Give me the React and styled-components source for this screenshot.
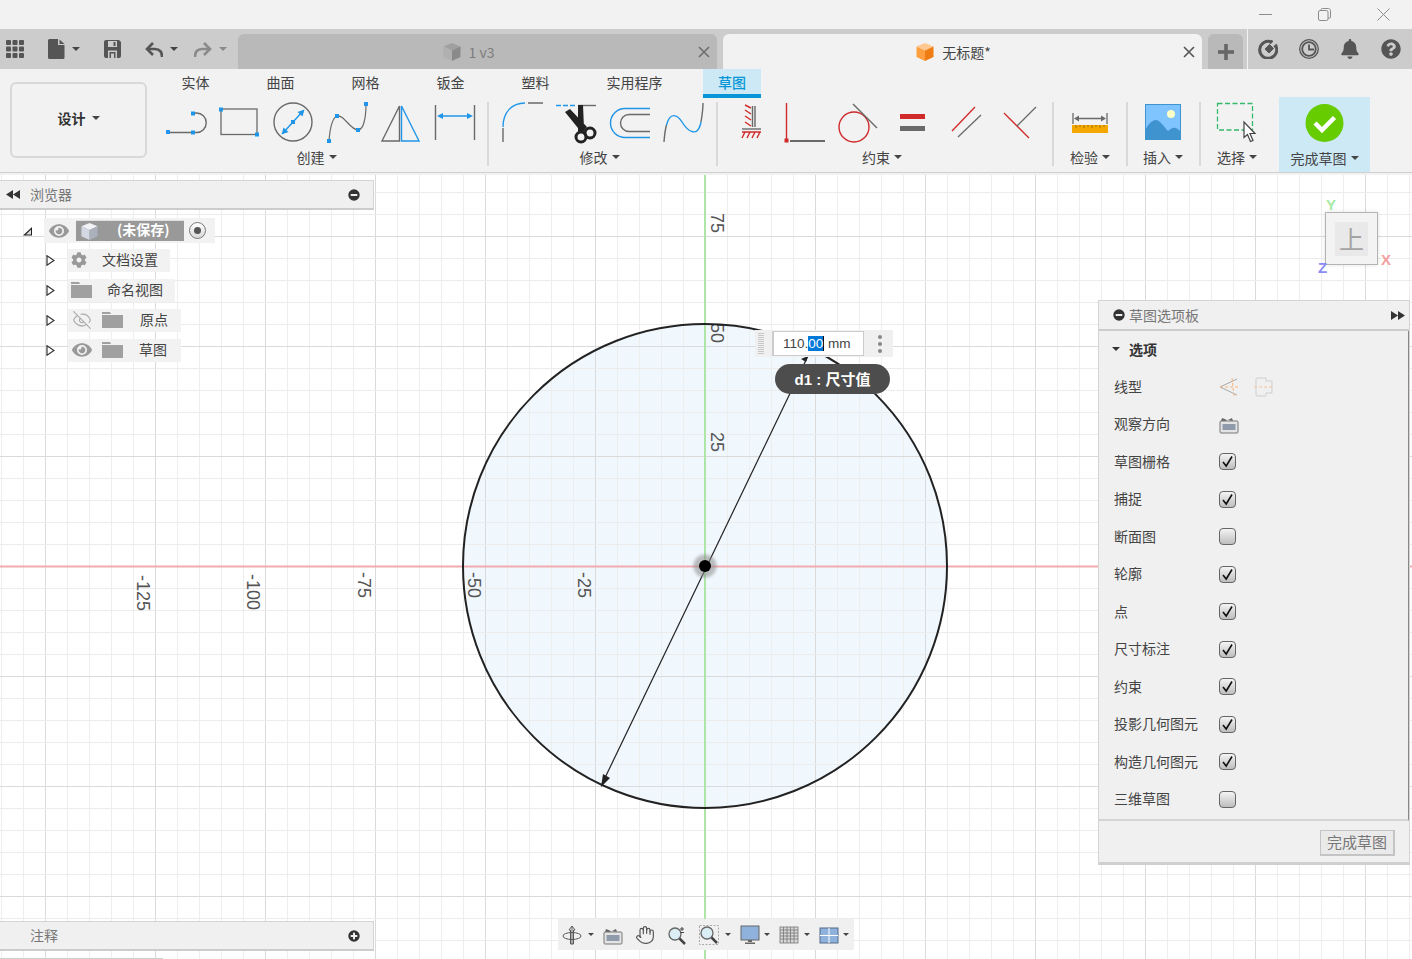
import React from "react";
import styled, { createGlobalStyle } from "styled-components";
import { FaBell, FaCog, FaEye, FaQuestionCircle } from "react-icons/fa";
import { LuEyeOff, LuHand } from "react-icons/lu";

const BLUE = "#2196e8";
const GRAY = "#6a6a6a";
const RED = "#d02a2a";

const GlobalStyle = createGlobalStyle`
	html, body {
		margin: 0;
		padding: 0;
		background: #f2f2f2;
	}
	body {
		font-family: "Noto Sans CJK SC", "Liberation Sans", sans-serif;
		font-size: 14px;
		color: #444;
	}
	* { box-sizing: border-box; }
`;

const Page = styled.div`
	width: 1412px;
	height: 959px;
	display: flex;
	flex-direction: column;
	overflow: hidden;
`;

/* title bar */
const TitleBar = styled.div`
	height: 29px;
	flex: none;
	display: flex;
	justify-content: flex-end;
	align-items: center;
	gap: 46px;
	padding-right: 22px;
	background: #f2f2f2;
`;

const WindowIcon = styled.svg`
	width: 13px;
	height: 13px;
	fill: none;
	stroke: #8c8c8c;
	stroke-width: 1;
`;

/* tab bar */
const TabBar = styled.div`
	height: 40px;
	flex: none;
	display: flex;
	background: #cccccc;
`;

const QuickTools = styled.div`
	width: 238px;
	flex: none;
	display: flex;
	align-items: center;
	gap: 24px;
	padding-left: 6px;
`;

const ToolGroup = styled.div`
	display: flex;
	align-items: center;
	gap: 7px;
`;

const HistoryTools = styled.div`
	display: flex;
	align-items: center;
	gap: 16px;
`;

const Caret = styled.span`
	flex: none;
	width: 0;
	height: 0;
	border-left: ${(p) => p.$size || 4}px solid transparent;
	border-right: ${(p) => p.$size || 4}px solid transparent;
	border-top: ${(p) => p.$size || 4}px solid ${(p) => p.$color || "#444"};
`;

const Tab = styled.div`
	width: 479px;
	height: 35px;
	margin-top: 5px;
	margin-right: 6px;
	flex: none;
	display: flex;
	align-items: center;
	padding: 0 7px 0 0;
	border-radius: 6px 6px 0 0;
	background: ${(p) => (p.$active ? "#f2f2f2" : "#b9b9b9")};
	color: ${(p) => (p.$active ? "#444" : "#7d7d7d")};
`;

const TabTitle = styled.div`
	flex: 1;
	display: flex;
	justify-content: center;
	align-items: center;
	gap: 7px;
	font-size: 14px;
`;

const PlusTab = styled.div`
	width: 35px;
	height: 35px;
	margin-top: 5px;
	flex: none;
	display: flex;
	justify-content: center;
	align-items: center;
	border-radius: 6px 6px 0 0;
	background: #b9b9b9;
`;

const StatusTools = styled.div`
	margin-left: 4px;
	flex: 1;
	display: flex;
	align-items: center;
	gap: 21px;
	padding: 0 0 0 10px;
	border-left: 1px solid #f2f2f2;
	color: #555;
`;

/* ribbon */
const Ribbon = styled.div`
	height: 104px;
	flex: none;
	display: flex;
	padding-left: 10px;
	background: #f2f2f2;
	border-bottom: 1px solid #cfcfcf;
`;

const DesignButton = styled.div`
	width: 137px;
	height: 76px;
	margin-top: 13px;
	padding-bottom: 5px;
	flex: none;
	display: flex;
	justify-content: center;
	align-items: center;
	gap: 6px;
	border: 2px solid #d8d8d8;
	border-radius: 6px;
	font-weight: 700;
	color: #333;
`;

const RibbonMain = styled.div`
	margin-left: 6px;
	display: flex;
	flex-direction: column;
`;

const RibbonTabs = styled.div`
	height: 29px;
	display: flex;
`;

const RibbonTab = styled.div`
	height: 29px;
	display: flex;
	justify-content: center;
	padding: 4px 28.5px 0;
	line-height: 18px;
	color: #444;
`;

const ActiveRibbonTab = styled.div`
	margin-left: 12px;
	width: 58px;
	height: 29px;
	padding-top: 4px;
	text-align: center;
	line-height: 18px;
	font-weight: 500;
	color: #0696d7;
	background: #cde9f6;
	border-bottom: 4px solid #0696d7;
`;

const Groups = styled.div`
	height: 74px;
	display: flex;
`;

const Group = styled.div`
	display: flex;
	flex-direction: column;
	padding-left: ${(p) => p.$pl}px;
	padding-right: ${(p) => p.$pr}px;
`;

const GroupIcons = styled.div`
	height: 44px;
	margin-top: 2px;
	display: flex;
	gap: 10px;
`;

const GroupLabel = styled.div`
	height: 20px;
	margin-top: 3px;
	padding-right: ${(p) => p.$shift || 0}px;
	display: flex;
	justify-content: center;
	align-items: center;
	gap: 4px;
	line-height: 20px;
	white-space: nowrap;
`;

const Separator = styled.div`
	width: 2px;
	height: 64px;
	margin-top: 4px;
	flex: none;
	background: #d9d9d9;
`;

const FinishButton = styled.div`
	width: 91px;
	height: 75px;
	margin-top: -1px;
	margin-left: 20px;
	padding-top: 4px;
	flex: none;
	display: flex;
	flex-direction: column;
	align-items: center;
	background: #cde9f6;
`;

const RibbonIcon = styled.svg.attrs({ viewBox: "0 0 44 44" })`
	width: 44px;
	height: 44px;
	flex: none;
	fill: none;
	overflow: visible;
`;

const Handle = ({ x, y }) => <rect x={x - 2} y={y - 2} width="4" height="4" fill={BLUE} />;

/* canvas */
const Canvas = styled.div`
	position: relative;
	flex: 1;
	border-top: 2px solid #f2f2f2;
	background: #fff;
`;

const Drawing = styled.svg`
	display: block;
	width: 1412px;
	height: 784px;
`;

const AxisLabel = styled.text`
	font-family: "Liberation Sans", sans-serif;
	font-size: 18px;
	fill: #555;
	text-anchor: middle;
	dominant-baseline: central;
`;

const Halo = styled.circle`
	filter: blur(1.5px);
`;

const Panel = styled.div`
	position: absolute;
	left: 0;
	width: 374px;
	top: ${(p) => (p.$top !== undefined ? `${p.$top}px` : "auto")};
	bottom: ${(p) => (p.$bottom !== undefined ? `${p.$bottom}px` : "auto")};
`;

const PanelHeader = styled.div`
	height: 30px;
	display: flex;
	align-items: center;
	padding: 0 13px 0 6px;
	background: #f0f0f0;
	border: 1px solid #d4d4d4;
	border-bottom: 2px solid #cccccc;
	border-left: 0;
	color: #777;
`;

const PanelTitle = styled.span`
	flex: 1;
	margin-left: ${(p) => p.$ml || 0}px;
	margin-top: -1px;
`;

const TreeList = styled.div`
	padding-top: 8px;
	display: flex;
	flex-direction: column;
`;

const RootRow = styled.div`
	height: 25px;
	margin-bottom: 2px;
	display: flex;
	align-items: center;
`;

const RootCells = styled.div`
	margin-left: 12px;
	height: 25px;
	width: 171px;
	display: flex;
	align-items: center;
	background: #f2f2f2;
`;

const SelectedCell = styled.div`
	width: 108px;
	height: 21px;
	margin-left: 7px;
	display: flex;
	align-items: center;
	background: #999;
	border-top: 1px solid #e0e0e0;
`;

const SelectedLabel = styled.span`
	margin-left: 18px;
	margin-top: -4px;
	font-weight: 700;
	font-size: 14px;
	line-height: 20px;
	color: #fff;
`;

const RootRadio = styled.span`
	width: 17px;
	height: 17px;
	margin-left: 5px;
	flex: none;
	display: flex;
	justify-content: center;
	align-items: center;
	border: 1.5px solid #777;
	border-radius: 50%;
	background: linear-gradient(#fff, #d8d8d8);
	&::after {
		content: "";
		width: 7px;
		height: 7px;
		border-radius: 50%;
		background: #555;
	}
`;

const TreeRow = styled.div`
	height: 30px;
	display: flex;
	align-items: center;
	padding-left: 46px;
`;

const TreeCell = styled.div`
	height: 23px;
	width: ${(p) => p.$width}px;
	margin-left: 13px;
	flex: none;
	display: flex;
	align-items: center;
	padding-left: 3px;
	background: #f2f2f2;
	color: #444;
`;

const TreeText = styled.span`
	margin-left: ${(p) => p.$ml}px;
	margin-top: -2px;
`;

const EyeWrap = styled.span`
	width: 21px;
	margin-left: ${(p) => p.$ml || 0}px;
	flex: none;
	display: flex;
	justify-content: center;
	color: ${(p) => p.$color || "#999"};
`;

const IconGap = styled.span`
	margin-left: ${(p) => p.$ml}px;
	display: flex;
`;

const OptionsPanel = styled.div`
	position: absolute;
	top: 125px;
	left: 1098px;
	width: 312px;
	height: 565px;
	display: flex;
	flex-direction: column;
	background: #f0f0f0;
	border: 1px solid #d4d4d4;
	border-bottom: 3px solid #cfcfcf;
`;

const OptionsHeader = styled.div`
	height: 30px;
	flex: none;
	display: flex;
	align-items: center;
	padding: 0 4px 0 14px;
	border-bottom: 2px solid #cccccc;
	color: #777;
`;

const OptionsBody = styled.div`
	flex: 1;
	display: flex;
	flex-direction: column;
	padding-left: 15px;
	border-right: 1px solid #888;
	border-bottom: 2px solid #d4d4d4;
`;

const SectionTitle = styled.div`
	height: 37px;
	margin-left: -2px;
	padding-bottom: 2px;
	display: flex;
	align-items: center;
	gap: 9px;
	font-weight: 700;
	color: #333;
`;

const OptionRow = styled.div`
	height: 37.5px;
	display: flex;
	align-items: center;
`;

const OptionLabel = styled.div`
	width: 105px;
	margin-top: -2px;
	flex: none;
	color: #444;
`;

const OptionControls = styled.div`
	display: flex;
	align-items: center;
	gap: 15px;
`;

const CheckBox = styled.div`
	width: 17px;
	height: 17px;
	display: flex;
	align-items: center;
	justify-content: center;
	border: 1.5px solid #666;
	border-radius: 4px;
	background: linear-gradient(#f4f4f4, #bdbdbd);
`;

const OptionsFooter = styled.div`
	height: 41px;
	flex: none;
	display: flex;
	justify-content: flex-end;
	align-items: flex-start;
	padding: 9px 14px 0 0;
`;

const FinishSmall = styled.div`
	width: 75px;
	height: 26px;
	padding-bottom: 2px;
	display: flex;
	justify-content: center;
	align-items: center;
	background: #eaeaea;
	border: 1px solid #c4c4c4;
	border-right-width: 2px;
	border-bottom-width: 2px;
	font-size: 15px;
	color: #777;
`;

const DimensionBox = styled.div`
	position: absolute;
	left: 755px;
	top: 155px;
	width: 138px;
	height: 27px;
	display: flex;
	align-items: center;
	background: #f0f0f0;
`;

const Grip = styled.div`
	width: 6px;
	height: 22px;
	margin-left: 3px;
	background: repeating-linear-gradient(#c8c8c8 0 1px, transparent 1px 2px);
`;

const DimensionInput = styled.div`
	width: 92px;
	height: 25px;
	margin-left: 8px;
	padding-left: 9px;
	display: flex;
	align-items: center;
	background: #fff;
	border: 1px solid #ccc;
	border-left-width: 2px;
	font-family: "Liberation Sans", sans-serif;
	font-size: 13.5px;
	color: #444;
	white-space: pre;
`;

const Selected = styled.span`
	background: #0078d7;
	color: #fff;
	border-right: 1px solid #111;
`;

const MoreDots = styled.div`
	margin-left: 14px;
	display: flex;
	flex-direction: column;
	gap: 3px;
`;

const MoreDot = styled.span`
	width: 4px;
	height: 4px;
	border-radius: 50%;
	background: #888;
`;

const ValuePill = styled.div`
	position: absolute;
	left: 775px;
	top: 189px;
	width: 115px;
	height: 30px;
	padding-bottom: 2px;
	display: flex;
	justify-content: center;
	align-items: center;
	border-radius: 15px;
	background: #4d4d4d;
	color: #fff;
	font-family: "Liberation Sans", "Noto Sans CJK SC", sans-serif;
	font-weight: 700;
	font-size: 15px;
`;

const ViewCube = styled.div`
	position: absolute;
	left: 1325px;
	top: 37px;
	width: 53px;
	height: 53px;
	display: flex;
	justify-content: center;
	align-items: center;
	background: #f3f3f3;
	border: 1px solid #b4b4b4;
	box-shadow: 0 0 4px rgba(0, 0, 0, 0.12);
`;

const CubeFace = styled.div`
	width: 33px;
	height: 34px;
	display: flex;
	justify-content: center;
	align-items: center;
	background: #e9e9e9;
	color: #a4a4a4;
	font-size: 25px;
	line-height: 1;
`;

const AxisTag = styled.span`
	position: absolute;
	left: ${(p) => p.$x}px;
	top: ${(p) => p.$y}px;
	font-family: "Liberation Sans", sans-serif;
	font-size: 15px;
	font-weight: 700;
	color: ${(p) => p.$color};
`;

const NavBar = styled.div`
	position: absolute;
	left: 558px;
	bottom: 9px;
	width: 296px;
	height: 31px;
	display: flex;
	align-items: center;
	gap: 9px;
	padding-left: 4px;
	background: #f0f0f0;
`;

const NavItem = styled.div`
	display: flex;
	align-items: center;
	gap: ${(p) => p.$gap || 6}px;
	width: ${(p) => p.$width || "auto"};
	color: #555;
`;

const NavIcon = styled.svg.attrs({ viewBox: "0 0 20 20" })`
	width: 20px;
	height: 20px;
	flex: none;
	fill: none;
`;

const NavCaret = styled(Caret).attrs({ $size: 3.5 })``;

const StatusLine = styled.div`
	position: absolute;
	left: 0;
	bottom: 0;
	width: 163px;
	height: 1px;
	background: #cfcfcf;
`;

/* small drawings */
const MinusBall = ({ plus }) => (
	<svg width="12" height="12" viewBox="0 0 12 12">
		<circle cx="6" cy="6" r="5.7" fill="#333" />
		<rect x="2.7" y="5" width="6.6" height="2" fill="#eee" />
		{plus && <rect x="5" y="2.7" width="2" height="6.6" fill="#eee" />}
	</svg>
);

const DoubleArrow = ({ left }) => (
	<svg width="14" height="9" viewBox="0 0 14 9" fill="#333">
		{left ? <path d="M7 0v9L0 4.5zM14 0v9L7 4.5z" /> : <path d="M0 0v9l7-4.5zM7 0v9l7-4.5z" />}
	</svg>
);

const Folder = () => (
	<svg width="21" height="16" viewBox="0 0 21 16" fill="#a0a0a0">
		<path d="M0 0h8l1 2h-9zM0 3h21v13H0z" />
	</svg>
);

const Expander = () => (
	<svg width="9" height="11" viewBox="0 0 9 11">
		<path d="M1 .8L8 5.5 1 10.2z" fill="#fff" stroke="#333" strokeWidth="1.2" />
	</svg>
);

const Check = () => (
	<svg width="13" height="13" viewBox="0 0 13 13" fill="none" stroke="#111" strokeWidth="1.6">
		<path d="M2 7l3.2 4L11 1.5" />
	</svg>
);

const Cube = ({ top, left, right, size = 20 }) => (
	<svg width={size} height={size} viewBox="0 0 20 20">
		<path d="M10 1l8.5 3.5L10 8.5 1.5 4.5z" fill={top} />
		<path d="M1.5 4.5L10 8.5V19L1.5 15z" fill={left} />
		<path d="M18.5 4.5L10 8.5V19l8.5-4z" fill={right} />
	</svg>
);

const HomeIcon = ({ size = 20 }) => (
	<svg width={size} height={size} viewBox="0 0 20 20">
		<path d="M2 7l1-3 5 2-1 1zM9 6l4-2 1 3z" fill="#666" />
		<rect x="1" y="7" width="18" height="12" rx="1" fill="#e4e4e4" stroke="#777" />
		<rect x="3.5" y="10" width="13" height="6" fill="#8f9bab" />
	</svg>
);

const options = [
	["草图栅格", true],
	["捕捉", true],
	["断面图", false],
	["轮廓", true],
	["点", true],
	["尺寸标注", true],
	["约束", true],
	["投影几何图元", true],
	["构造几何图元", true],
	["三维草图", false],
];

const ribbonTabs = ["实体", "曲面", "网格", "钣金", "塑料", "实用程序"];

const gridXs = Array.from({ length: 66 }, (_, i) => 1 + i * 22);
const gridYs = Array.from({ length: 38 }, (_, i) => 170 + i * 22);

const axisLabels = [
	["75", 717, 223],
	["50", 717, 333],
	["25", 717, 442],
	["-25", 584, 585],
	["-50", 474, 585],
	["-75", 364, 585],
	["-100", 253, 592],
	["-125", 143, 593],
];

function Viewport() {
	return (
		<Drawing viewBox="0 175 1412 784">
			<circle cx="705" cy="566" r="242" fill="#f0f7fd" />
			{gridXs.map((x) => {
				const major = (705 - x) % 110 === 0;
				return <line key={x} x1={x + 0.5} x2={x + 0.5} y1="175" y2="959" stroke={major ? "#dadada" : "#ececec"} strokeOpacity={major ? 1 : 0.9} />;
			})}
			{gridYs.map((y) => {
				const major = (566 - y) % 110 === 0;
				return <line key={y} y1={y + 0.5} y2={y + 0.5} x1="0" x2="1412" stroke={major ? "#dadada" : "#ececec"} />;
			})}
			<line x1="0" x2="1412" y1="566.5" y2="566.5" stroke="#f0acb0" strokeWidth="2" />
			<line x1="705" x2="705" y1="175" y2="959" stroke="#aee6a8" strokeWidth="2" />
			{axisLabels.map(([t, x, y]) => (
				<AxisLabel key={t} x={x} y={y} transform={`rotate(90 ${x} ${y})`}>
					{t}
				</AxisLabel>
			))}
			<circle cx="705" cy="566" r="242" fill="none" stroke="#222" strokeWidth="2" />
			<line x1="808" y1="356" x2="602" y2="784" stroke="#222" strokeWidth="1.2" />
			<path d="M601 787l2-13 7 4z" fill="#222" />
			<path d="M808 356l-7 3 5 3z" fill="#222" />
			<Halo cx="705" cy="566" r="11.5" fill="#8a8a8a" fillOpacity="0.55" />
			<circle cx="705" cy="566" r="6" fill="#000" />
		</Drawing>
	);
}

function App() {
	return (
		<Page>
			<GlobalStyle />
			<TitleBar>
				<WindowIcon viewBox="0 0 13 13">
					<path d="M0 6.5h13" />
				</WindowIcon>
				<WindowIcon viewBox="0 0 13 13">
					<rect x="0.5" y="2.5" width="9.5" height="10" rx="1.5" />
					<path d="M3 2.5V1.8C3 1 3.5.5 4.3.5H10.5c1.2 0 2 .8 2 2V9c0 .8-.5 1.2-1.2 1.2H10" />
				</WindowIcon>
				<WindowIcon viewBox="0 0 13 13">
					<path d="M.5.5l12 12M12.5.5l-12 12" />
				</WindowIcon>
			</TitleBar>

			<TabBar>
				<QuickTools>
					<svg width="18" height="18" viewBox="0 0 18 18" fill="#555">
						{[0, 6.5, 13].map((x) =>
							[0, 6.5, 13].map((y) => <rect key={`${x}-${y}`} x={x} y={y} width="5" height="5" rx="1" />)
						)}
					</svg>
					<ToolGroup>
						<svg width="17" height="20" viewBox="0 0 17 20" fill="#555">
							<path d="M1.5 0H10v6h6.5v12.5a1.5 1.5 0 0 1-1.5 1.5H1.5A1.5 1.5 0 0 1 0 18.5v-17A1.5 1.5 0 0 1 1.5 0zM11.5.5l5 4.5h-5z" />
						</svg>
						<Caret />
					</ToolGroup>
					<svg width="17" height="18" viewBox="0 0 17 18" fill="#555">
						<path d="M2 0h13l2 2v14a2 2 0 0 1-2 2H2a2 2 0 0 1-2-2V2a2 2 0 0 1 2-2zM4 1v6h9V1zM9.5 2h2v4h-2zM4 10.5V18h9v-7.5zM5.5 12h6v6h-1.5v-4.5H7V18H5.5z" fillRule="evenodd" />
					</svg>
					<HistoryTools>
						<ToolGroup>
							<svg width="18" height="17" viewBox="0 0 18 17" fill="none" stroke="#555" strokeWidth="2.6">
								<path d="M17 16c0-5-2-8-7-8H2.5" />
								<path d="M8 2L2 8l6 6" />
							</svg>
							<Caret />
						</ToolGroup>
						<ToolGroup>
							<svg width="18" height="17" viewBox="0 0 18 17" fill="none" stroke="#8a8a8a" strokeWidth="2.6">
								<path d="M1 16c0-5 2-8 7-8h7.5" />
								<path d="M10 2l6 6-6 6" />
							</svg>
							<Caret $color="#8a8a8a" />
						</ToolGroup>
					</HistoryTools>
				</QuickTools>

				<Tab>
					<TabTitle>
						<Cube top="#a0a0a0" left="#b0b0b0" right="#8a8a8a" />
						<span>1 v3</span>
					</TabTitle>
					<svg width="12" height="12" viewBox="0 0 12 12" stroke="#6e6e6e" strokeWidth="1.6">
						<path d="M1 1l10 10M11 1L1 11" />
					</svg>
				</Tab>
				<Tab $active>
					<TabTitle>
						<Cube top="#ffc890" left="#ffa040" right="#f07c14" />
						<span>无标题*</span>
					</TabTitle>
					<svg width="12" height="12" viewBox="0 0 12 12" stroke="#555" strokeWidth="1.6">
						<path d="M1 1l10 10M11 1L1 11" />
					</svg>
				</Tab>
				<PlusTab>
					<svg width="16" height="16" viewBox="0 0 16 16" fill="#666">
						<rect x="0" y="6.2" width="16" height="3.6" />
						<rect x="6.2" y="0" width="3.6" height="16" />
					</svg>
				</PlusTab>
				<StatusTools>
					<svg width="20" height="20" viewBox="0 0 20 20" fill="none" stroke="#555">
						<path d="M13.5 3A8.5 8.5 0 1 0 17.8 7" strokeWidth="3" />
						<path d="M7 10l4.5-4.5 4 4L11 14z" fill="#555" strokeWidth="1" />
						<path d="M12 4.5l2.5-3M16 8l3-2.5" strokeWidth="2" />
					</svg>
					<svg width="20" height="20" viewBox="0 0 20 20" fill="none" stroke="#555">
						<circle cx="10" cy="10" r="9.3" strokeWidth="1.3" />
						<circle cx="10" cy="10" r="6.8" strokeWidth="1.8" />
						<path d="M10 5.5V10.5H15" strokeWidth="1.8" />
					</svg>
					<FaBell size={20} />
					<FaQuestionCircle size={20} />
				</StatusTools>
			</TabBar>

			<Ribbon>
				<DesignButton>
					设计
					<Caret />
				</DesignButton>
				<RibbonMain>
					<RibbonTabs>
						{ribbonTabs.map((t) => (
							<RibbonTab key={t}>{t}</RibbonTab>
						))}
						<ActiveRibbonTab>草图</ActiveRibbonTab>
					</RibbonTabs>
					<Groups>
						<Group $pl={11} $pr={9}>
							<GroupIcons>
								<RibbonIcon>
									<path d="M4 32.5h25M29 13h3.5a9.7 9.7 0 0 1 0 19.5H29" stroke={GRAY} strokeWidth="1.4" />
									<Handle x={4} y={32} />
									<Handle x={29} y={32.5} />
									<Handle x={29} y={13.5} />
								</RibbonIcon>
								<RibbonIcon>
									<rect x="3" y="9" width="36" height="25.5" stroke={GRAY} strokeWidth="1.3" />
									<Handle x={3} y={9.5} />
									<Handle x={39} y={34.5} />
								</RibbonIcon>
								<RibbonIcon>
									<circle cx="21" cy="22" r="19" stroke={GRAY} strokeWidth="1.4" />
									<path d="M11 33L31 11" stroke={BLUE} strokeWidth="1.5" />
									<path d="M9.5 34.5l2-7 5 4.5zM32.5 9.5l-2 7-5-4.5z" fill={BLUE} />
									<Handle x={21} y={22} />
								</RibbonIcon>
								<RibbonIcon>
									<path d="M3 41C4 28 6 18 11 16c7-2 13 14 21 14 6 0 8-14 8-26" stroke={GRAY} strokeWidth="1.2" />
									<Handle x={3} y={41} />
									<Handle x={11} y={16} />
									<Handle x={32} y={30} />
									<Handle x={40} y={4} />
								</RibbonIcon>
								<RibbonIcon>
									<path d="M2 41L19.5 6v35z" stroke={GRAY} strokeWidth="1.4" />
									<path d="M21.5 6v35H39z" stroke={BLUE} strokeWidth="1.4" />
								</RibbonIcon>
								<RibbonIcon>
									<path d="M1.5 5v35M40.5 5v35" stroke={GRAY} strokeWidth="1.4" />
									<path d="M5 16h32" stroke={BLUE} strokeWidth="1.5" />
									<path d="M3 16l6-3v6zM39 16l-6-3v6z" fill={BLUE} />
								</RibbonIcon>
							</GroupIcons>
							<GroupLabel $shift={9}>
								创建
								<Caret />
							</GroupLabel>
						</Group>
						<Separator />
						<Group $pl={11} $pr={10}>
							<GroupIcons>
								<RibbonIcon>
									<path d="M3 28v14M28 3h15" stroke={GRAY} strokeWidth="1.4" />
									<path d="M3 27C3 12 12 3 25 3" stroke={BLUE} strokeWidth="1.4" />
								</RibbonIcon>
								<RibbonIcon>
									<path d="M2 5.5h20" stroke={BLUE} strokeWidth="1.4" strokeDasharray="5 2" />
									<path d="M24 5.5h18" stroke={GRAY} strokeWidth="1.4" />
									<path d="M11 12l5-3 17 18-5 6zM24 5l5 0 1 23-6 5z" fill="#222" />
									<circle cx="27" cy="37" r="5" stroke="#222" strokeWidth="3" />
									<circle cx="36" cy="33" r="5" stroke="#222" strokeWidth="3" />
								</RibbonIcon>
								<RibbonIcon>
									<path d="M42 8.5H17a14.5 14.5 0 0 0 0 29h25" stroke={BLUE} strokeWidth="1.4" />
									<path d="M42 14.5H21a8.5 8.5 0 0 0 0 17h21" stroke={GRAY} strokeWidth="1.4" />
								</RibbonIcon>
								<RibbonIcon>
									<path d="M2 42c.5-7 1-12 2.5-17M39 22c1-6 2-12 2-19" stroke={GRAY} strokeWidth="1.4" />
									<path d="M4.5 25C8 12 15 14 20 22c6 10 16 16 19 0" stroke={BLUE} strokeWidth="1.4" />
								</RibbonIcon>
							</GroupIcons>
							<GroupLabel $shift={7}>
								修改
								<Caret />
							</GroupLabel>
						</Group>
						<Separator />
						<Group $pl={12} $pr={8}>
							<GroupIcons>
								<RibbonIcon>
									<path d="M22.5 6v21M25 6v21" stroke={GRAY} strokeWidth="1.4" />
									<path d="M21 8l-6-3M21 14l-6-4M21 20l-6-4M21 26l-6-4" stroke={RED} strokeWidth="1.4" />
									<path d="M12 29h19" stroke={GRAY} strokeWidth="1.4" />
									<path d="M12 32h19M15 32l-3 6M20 32l-3 6M25 32l-3 6M30 32l-3 6" stroke={RED} strokeWidth="1.4" />
								</RibbonIcon>
								<RibbonIcon>
									<path d="M2.5 3v36" stroke={RED} strokeWidth="1.4" />
									<path d="M6 41h35" stroke={GRAY} strokeWidth="1.8" />
									<rect x="0.5" y="38.5" width="4" height="4" fill={RED} />
								</RibbonIcon>
								<RibbonIcon>
									<circle cx="16" cy="27" r="15" stroke={RED} strokeWidth="1.4" />
									<path d="M15 4l24 24" stroke={GRAY} strokeWidth="1.4" />
								</RibbonIcon>
								<RibbonIcon>
									<rect x="8" y="14" width="25" height="5" fill={RED} />
									<rect x="8" y="26" width="25" height="5" fill={GRAY} />
								</RibbonIcon>
								<RibbonIcon>
									<path d="M6 31L29 7" stroke={RED} strokeWidth="1.3" />
									<path d="M12 37L35 15" stroke={GRAY} strokeWidth="1.3" />
								</RibbonIcon>
								<RibbonIcon>
									<path d="M4 13l25 25" stroke={RED} strokeWidth="1.3" />
									<path d="M36 7L17 26" stroke={GRAY} strokeWidth="1.3" />
								</RibbonIcon>
							</GroupIcons>
							<GroupLabel $shift={10}>
								约束
								<Caret />
							</GroupLabel>
						</Group>
						<Separator />
						<Group $pl={14} $pr={14}>
							<GroupIcons>
								<RibbonIcon>
									<path d="M5 13v11M39 13v11M8 18.5h28" stroke={GRAY} strokeWidth="1.3" />
									<path d="M6 18.5l5-3v6zM38 18.5l-5-3v6z" fill={GRAY} />
									<rect x="4" y="25" width="36" height="8" fill="#f5a800" />
									<path d="M8 25v3M12 25v2M16 25v3M20 25v2M24 25v3M28 25v2M32 25v3M36 25v2" stroke="#8a6200" strokeWidth="0.8" />
								</RibbonIcon>
							</GroupIcons>
							<GroupLabel>
								检验
								<Caret />
							</GroupLabel>
						</Group>
						<Separator />
						<Group $pl={13} $pr={14}>
							<GroupIcons>
								<RibbonIcon>
									<rect x="4" y="4" width="36" height="36" fill="#80c4ff" />
									<circle cx="30" cy="14" r="4" fill="#ffffc8" />
									<path d="M4 31c3-7 7-11 11-11 4 0 8 7 12 11 3-3 6-4 8-3 2 1 4 3 5 4v8H4z" fill="#3f94d0" />
									<rect x="4.5" y="4.5" width="35" height="35" stroke="#3f94d0" />
								</RibbonIcon>
							</GroupIcons>
							<GroupLabel>
								插入
								<Caret />
							</GroupLabel>
						</Group>
						<Separator />
						<Group $pl={14} $pr={0}>
							<GroupIcons>
								<RibbonIcon>
									<rect x="2.5" y="3.5" width="35" height="26.5" stroke="#35b96a" strokeWidth="1.3" strokeDasharray="5 2.5" />
									<path d="M29 22v15.5l3.5-3 3 7 2.5-1-3-7h5z" fill="#fff" stroke="#444" strokeWidth="1.2" />
								</RibbonIcon>
							</GroupIcons>
							<GroupLabel>
								选择
								<Caret />
							</GroupLabel>
						</Group>
						<FinishButton>
							<RibbonIcon>
								<circle cx="21.5" cy="22" r="19" fill="#66cc00" />
								<path d="M12 22l7 7L31.5 16.5" stroke="#fff" strokeWidth="4.5" />
							</RibbonIcon>
							<GroupLabel>
								完成草图
								<Caret />
							</GroupLabel>
						</FinishButton>
					</Groups>
				</RibbonMain>
			</Ribbon>

			<Canvas>
				<Viewport />

				<Panel $top={5}>
					<PanelHeader>
						<DoubleArrow left />
						<PanelTitle $ml={10}>浏览器</PanelTitle>
						<MinusBall />
					</PanelHeader>
					<TreeList>
						<RootRow>
							<svg width="32" height="12" viewBox="0 0 32 12" style={{ flex: "none" }}>
								<path d="M23 10.5L32 2v8.5z" fill="#222" />
								<path d="M26 9.5L31 4.5v5z" fill="#ddd" />
							</svg>
							<RootCells>
								<EyeWrap $ml={4}>
									<FaEye size={20} />
								</EyeWrap>
								<SelectedCell>
									<IconGap $ml={4}>
										<Cube top="#f0f2f6" left="#d4d8e2" right="#aab0bc" size={19} />
									</IconGap>
									<SelectedLabel>(未保存)</SelectedLabel>
								</SelectedCell>
								<RootRadio />
							</RootCells>
						</RootRow>
						<TreeRow>
							<Expander />
							<TreeCell $width={102}>
								<FaCog size={16} color="#999" />
								<TreeText $ml={15}>文档设置</TreeText>
							</TreeCell>
						</TreeRow>
						<TreeRow>
							<Expander />
							<TreeCell $width={107}>
								<Folder />
								<TreeText $ml={15}>命名视图</TreeText>
							</TreeCell>
						</TreeRow>
						<TreeRow>
							<Expander />
							<TreeCell $width={113}>
								<EyeWrap $color="#aaa">
									<LuEyeOff size={20} strokeWidth={1.3} />
								</EyeWrap>
								<IconGap $ml={10}>
									<Folder />
								</IconGap>
								<TreeText $ml={17}>原点</TreeText>
							</TreeCell>
						</TreeRow>
						<TreeRow>
							<Expander />
							<TreeCell $width={113}>
								<EyeWrap>
									<FaEye size={20} />
								</EyeWrap>
								<IconGap $ml={10}>
									<Folder />
								</IconGap>
								<TreeText $ml={16}>草图</TreeText>
							</TreeCell>
						</TreeRow>
					</TreeList>
				</Panel>

				<Panel $bottom={8}>
					<PanelHeader>
						<PanelTitle $ml={24}>注释</PanelTitle>
						<MinusBall plus />
					</PanelHeader>
				</Panel>

				<DimensionBox>
					<Grip />
					<DimensionInput>
						110.<Selected>00</Selected> mm
					</DimensionInput>
					<MoreDots>
						<MoreDot />
						<MoreDot />
						<MoreDot />
					</MoreDots>
				</DimensionBox>
				<ValuePill>d1 : 尺寸值</ValuePill>

				<AxisTag $x={1326} $y={21} $color="#a6eaa6">Y</AxisTag>
				<ViewCube>
					<CubeFace>上</CubeFace>
				</ViewCube>
				<AxisTag $x={1381} $y={76} $color="#f5a0a0">X</AxisTag>
				<AxisTag $x={1318} $y={84} $color="#8a8af5">Z</AxisTag>

				<OptionsPanel>
					<OptionsHeader>
						<MinusBall />
						<PanelTitle $ml={4}>草图选项板</PanelTitle>
						<DoubleArrow />
					</OptionsHeader>
					<OptionsBody>
						<SectionTitle>
							<Caret $size={4.5} $color="#333" />
							选项
						</SectionTitle>
						<OptionRow>
							<OptionLabel>线型</OptionLabel>
							<OptionControls>
								<svg width="20" height="20" viewBox="0 0 20 20" fill="none">
									<path d="M18 2L1 10l17 8" stroke="#aaa" />
									<path d="M1 10h19M13 1l2 18" stroke="#f8b47a" strokeDasharray="3 2" />
								</svg>
								<svg width="20" height="20" viewBox="0 0 20 20" fill="none">
									<path d="M4 1h8v3h6v12h-6v3H4c-2 0-2-1-2-2V3c0-1 0-2 2-2z" stroke="#cfcfcf" />
									<path d="M0 10h20" stroke="#f8c49a" strokeDasharray="3 2" />
								</svg>
							</OptionControls>
						</OptionRow>
						<OptionRow>
							<OptionLabel>观察方向</OptionLabel>
							<OptionControls>
								<HomeIcon />
							</OptionControls>
						</OptionRow>
						{options.map(([label, checked]) => (
							<OptionRow key={label}>
								<OptionLabel>{label}</OptionLabel>
								<CheckBox>{checked && <Check />}</CheckBox>
							</OptionRow>
						))}
					</OptionsBody>
					<OptionsFooter>
						<FinishSmall>完成草图</FinishSmall>
					</OptionsFooter>
				</OptionsPanel>

				<NavBar>
					<NavItem>
						<NavIcon stroke="#555">
							<path d="M10 1v18M10 1L7 5h1.5v14h3V5H13z" fill="#fff" />
							<ellipse cx="10" cy="11" rx="9" ry="3.5" />
						</NavIcon>
						<NavCaret />
					</NavItem>
					<NavItem $width="23px">
						<HomeIcon />
					</NavItem>
					<NavItem $width="23px">
						<LuHand size={20} strokeWidth={1.4} />
					</NavItem>
					<NavItem $width="23px">
						<NavIcon>
							<circle cx="8" cy="9" r="6" fill="#dbeef5" stroke="#666" strokeWidth="1.3" />
							<path d="M12.5 13.5L18 19" stroke="#444" strokeWidth="2.5" />
							<path d="M15 2v4M13 4h4M13 7.5h4" stroke="#444" />
						</NavIcon>
					</NavItem>
					<NavItem>
						<NavIcon>
							<rect x="0.5" y="0.5" width="19" height="19" stroke="#aaa" strokeDasharray="2 1.5" />
							<circle cx="8" cy="8" r="6" fill="#dbeef5" stroke="#666" strokeWidth="1.3" />
							<path d="M12.5 12.5L18 18" stroke="#444" strokeWidth="2.5" />
						</NavIcon>
						<NavCaret />
					</NavItem>
					<NavItem $gap={4}>
						<NavIcon>
							<rect x="1" y="1" width="18" height="14" fill="#8fb2dc" stroke="#666" />
							<path d="M8 15h4v2H8zM5 17.5h10V19H5z" fill="#666" />
						</NavIcon>
						<NavCaret />
					</NavItem>
					<NavItem $gap={5}>
						<NavIcon stroke="#777" strokeWidth="0.8">
							<rect x="1" y="2" width="18" height="16" fill="#d8d8d8" />
							<path d="M1 5h18M1 8h18M1 11h18M1 14h18M4.5 2v16M8 2v16M11.500 2v16M15 2v16" />
						</NavIcon>
						<NavCaret />
					</NavItem>
					<NavItem $gap={4}>
						<NavIcon>
							<rect x="1" y="3" width="18" height="15" fill="#8fb2dc" stroke="#556b88" />
							<path d="M10 3v15M1 10.5h18" stroke="#fff" />
						</NavIcon>
						<NavCaret />
					</NavItem>
				</NavBar>
				<StatusLine />
			</Canvas>
		</Page>
	);
}

export default App;
